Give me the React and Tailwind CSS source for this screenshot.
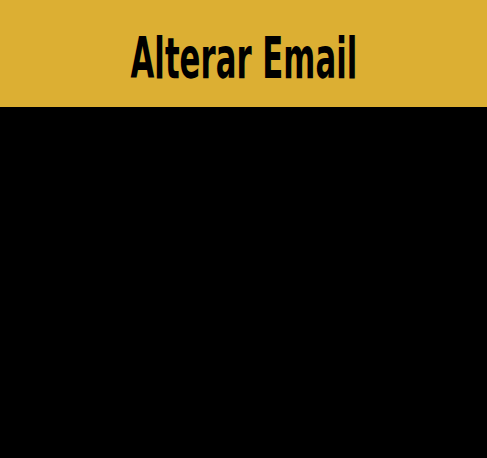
import React from 'react';

function App() {
  return (
    <div className="min-h-screen bg-black">
      {/* Header */}
      <header className="bg-[#dcaf33] h-[107px] flex items-center justify-center">
        <h1 className="text-[57px] leading-none text-black font-bold font-['DejaVu_Sans_Condensed',sans-serif] scale-x-[0.6] whitespace-nowrap pt-[10px]">
          Alterar Email
        </h1>
      </header>
    </div>
  );
}

export default App;
